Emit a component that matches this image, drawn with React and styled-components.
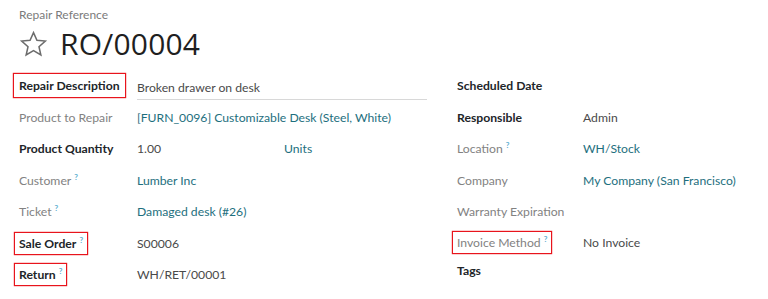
import React from "react";
import styled, { createGlobalStyle } from "styled-components";

const Global = createGlobalStyle`
  html, body { margin: 0; padding: 0; background: #fff; }
  body { font-family: "Lato", "Open Sans", sans-serif; color: #212529; }
`;

const Sheet = styled.div`
  width: 768px;
  height: 299px;
  box-sizing: border-box;
  padding: 7px 0 0 19px;
  overflow: hidden;
`;

const Caption = styled.div`
  font-size: 12px;
  line-height: 16px;
  color: #7b7b7b;
`;

const TitleRow = styled.div`
  display: flex;
  align-items: center;
  gap: 12px;
  height: 40px;
  margin-top: 1px;
`;

const Title = styled.h1`
  margin: 0;
  font-family: "Open Sans", sans-serif;
  font-size: 30px;
  font-weight: 500;
  line-height: 40px;
  color: #1f1f1f;
  letter-spacing: 0.2px;
`;

const Columns = styled.div`
  display: grid;
  grid-template-columns: 438px 1fr;
  margin-top: 6px;
`;

const Group = styled.div`
  display: grid;
  grid-template-columns: ${(p) => p.$labelWidth}px 1fr;
  grid-template-rows: ${(p) => p.$rows};
  align-items: center;
  padding-right: ${(p) => p.$padRight || 0}px;
`;

const Label = styled.div`
  font-size: 12.2px;
  font-weight: ${(p) => (p.$muted ? 400 : 700)};
  color: ${(p) => (p.$muted ? "#828282" : "#212529")};
  white-space: nowrap;
`;

const LabelText = styled.span`
  display: inline-block;
  line-height: 15px;
  ${(p) =>
    p.$boxed
      ? `
    padding: ${p.$pad || "3px 4px"};
    margin: ${p.$neg || "-3px -4px"};
    box-shadow: 0 0 0 1.2px #e8141c;
  `
      : ""}
`;

const Help = styled.sup`
  font-size: 8px;
  font-weight: 700;
  color: #5fb0d1;
  margin-left: 3px;
  vertical-align: 5px;
  line-height: 0;
`;

const Value = styled.div`
  font-size: 12.2px;
  color: ${(p) => (p.$link ? "#1e6f7e" : "#4a4a4a")};
  white-space: nowrap;
  display: flex;
  align-items: center;
`;

const InputValue = styled(Value)`
  border-bottom: 1px solid #d8d8d8;
  height: 24px;
  margin-top: 4px;
`;

const Qty = styled.span`
  width: 147px;
`;

const Unit = styled.span`
  color: #1e6f7e;
`;

const Star = () => (
  <svg width="29" height="28" viewBox="0 0 24 24" fill="none" stroke="#6c6c6c" strokeWidth="1.3" strokeLinejoin="miter">
    <path d="M12 2.2l2.95 6.6 7.2.7-5.45 4.8 1.6 7.1L12 17.7l-6.3 3.7 1.6-7.1L1.85 9.5l7.2-.7z" />
  </svg>
);

const L = ({ children, help, muted, boxed, pad, neg }) => (
  <Label $muted={muted}>
    <LabelText $boxed={boxed} $pad={pad} $neg={neg}>
      {children}
      {help && <Help>?</Help>}
    </LabelText>
  </Label>
);

export default function App() {
  return (
    <>
      <Global />
      <Sheet>
        <Caption>Repair Reference</Caption>
        <TitleRow>
          <Star />
          <Title>RO/00004</Title>
        </TitleRow>
        <Columns>
          <Group $labelWidth={118} $rows="repeat(7, 31.5px)" $padRight={30}>
            <L boxed pad="4px 5px" neg="-4px -5px">Repair Description</L>
            <InputValue>Broken drawer on desk</InputValue>

            <L muted>Product to Repair</L>
            <Value $link>[FURN_0096] Customizable Desk (Steel, White)</Value>

            <L>Product Quantity</L>
            <Value>
              <Qty>1.00</Qty>
              <Unit>Units</Unit>
            </Value>

            <L muted help>Customer</L>
            <Value $link>Lumber Inc</Value>

            <L muted help>Ticket</L>
            <Value $link>Damaged desk (#26)</Value>

            <L boxed help>Sale Order</L>
            <Value>S00006</Value>

            <L boxed help>Return</L>
            <Value>WH/RET/00001</Value>
          </Group>
          <Group $labelWidth={126} $rows="repeat(5, 31.5px) 29px 28px">
            <L>Scheduled Date</L>
            <Value />

            <L>Responsible</L>
            <Value>Admin</Value>

            <L muted help>Location</L>
            <Value $link>WH/Stock</Value>

            <L muted>Company</L>
            <Value $link>My Company (San Francisco)</Value>

            <L muted>Warranty Expiration</L>
            <Value />

            <L muted help boxed>Invoice Method</L>
            <Value>No Invoice</Value>

            <L>Tags</L>
            <Value />
          </Group>
        </Columns>
      </Sheet>
    </>
  );
}
